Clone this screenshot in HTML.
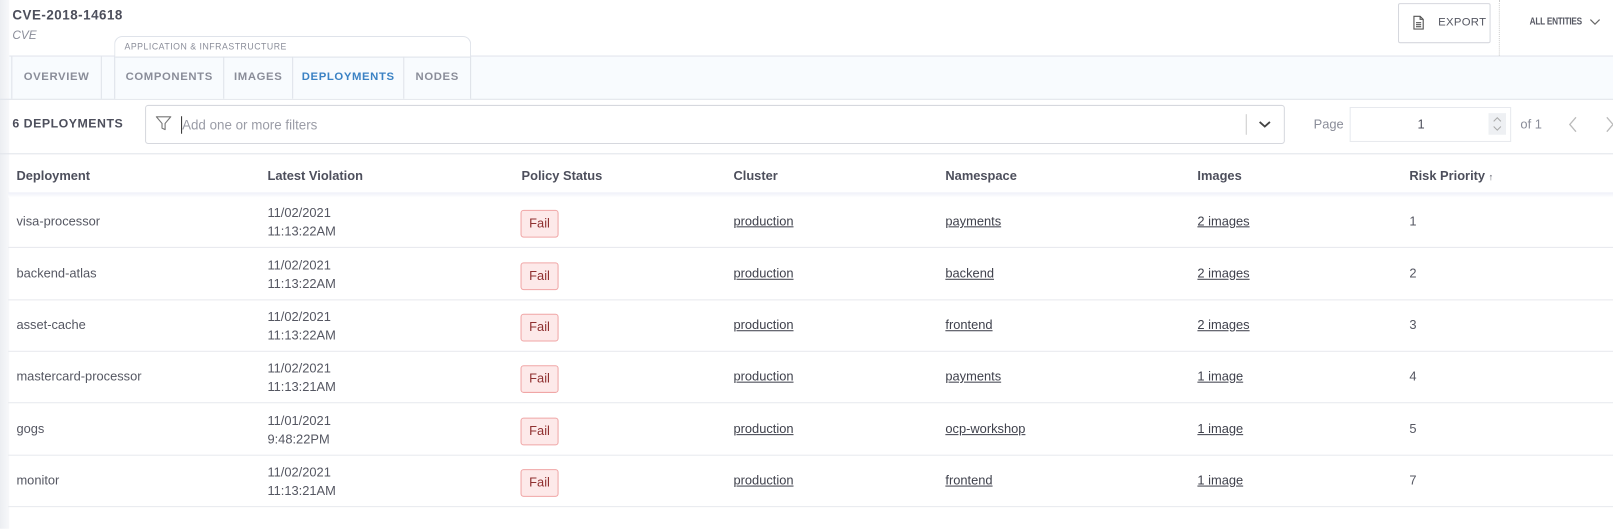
<!DOCTYPE html>
<html><head><meta charset="utf-8"><style>
*{box-sizing:border-box;margin:0;padding:0}
body{width:1613px;height:514px;background:#fff;font-family:"Liberation Sans",sans-serif;color:#4d4f5c;position:relative;overflow:hidden}
#w{position:absolute;left:0;top:0;width:1568px;height:500px;transform:scale(1.0287);transform-origin:0 0}
.a{position:absolute}
.lstrip{left:0;top:0;width:9px;height:514px;background:linear-gradient(90deg,#eceef2,#f7f8fa)}
.t{white-space:nowrap}
.tab{position:absolute;top:55px;height:41px;line-height:41px;font-size:11px;font-weight:bold;letter-spacing:.6px;color:#8a8d99;text-align:center;border-right:1px solid #dfe3ea}
.th{top:164px;font-size:12.5px;font-weight:bold;color:#4d4f5c}
.row{position:absolute;left:8px;width:1560px;height:50px;border-bottom:1px solid #e7e9ee}
.c{position:absolute;font-size:12.5px;color:#555762;white-space:nowrap}
.u{text-decoration:underline;color:#3f414c}
.fail{position:absolute;left:498px;top:13px;width:37px;height:27px;border:1px solid #f0a6a6;background:#fde9e9;border-radius:3px;color:#8f3030;font-size:12.5px;text-align:center;line-height:25px}
</style></head><body><div id="w">
<div class="a lstrip"></div>
<div class="a t" style="left:12px;top:7px;font-size:13px;font-weight:bold;letter-spacing:.5px;color:#4d4f5c">CVE-2018-14618</div>
<div class="a t" style="left:12px;top:29px;font-size:11.5px;font-style:italic;color:#8a8d99">CVE</div>
<div class="a" style="left:9px;top:54px;width:1604px;height:1px;background:#dfe3ea"></div>
<div class="a" style="left:9px;top:55px;width:1604px;height:41px;background:#f8fbfe"></div>
<div class="a" style="left:0;top:96px;width:1613px;height:1px;background:#dfe3ea"></div>
<div class="a" style="left:111px;top:35px;width:347px;height:61px;border:1px solid #dfe3ea;border-bottom:none;border-radius:8px 8px 0 0;background:#fff"></div>
<div class="a" style="left:112px;top:55px;width:345px;height:41px;background:#f8fbfe;border-top:1px solid #dfe3ea"></div>
<div class="a t" style="left:121px;top:40px;font-size:8.5px;letter-spacing:.5px;color:#8a8d99">APPLICATION &amp; INFRASTRUCTURE</div>
<div class="tab" style="left:11px;width:88px;border-left:1px solid #dfe3ea">OVERVIEW</div>
<div class="tab" style="left:111px;width:107px;border-left:1px solid #dfe3ea">COMPONENTS</div>
<div class="tab" style="left:218px;width:67px">IMAGES</div>
<div class="tab" style="left:285px;width:108px;color:#3b82c4">DEPLOYMENTS</div>
<div class="tab" style="left:393px;width:65px">NODES</div>
<div class="a" style="left:1359px;top:3px;width:90px;height:39px;border:1.5px solid #d6d8de;border-radius:2px"></div>
<svg class="a" style="left:1373px;top:15px" width="12" height="14" viewBox="0 0 12 14"><path d="M1.5 .8h6l3 3v9.4h-9z M7.5 .8v3h3 M3.5 7h5 M3.5 9h5 M3.5 11h5" fill="none" stroke="#555" stroke-width="1.1"/></svg>
<div class="a t" style="left:1398px;top:16px;font-size:11px;letter-spacing:.3px;color:#555762">EXPORT</div>
<div class="a" style="left:1457px;top:0;width:0;height:54px;border-left:1px dotted #ccc"></div>
<div class="a t" style="left:1487px;top:16px;font-size:10px;font-weight:bold;color:#555762;letter-spacing:-.3px;transform:scaleX(.8);transform-origin:0 0">ALL ENTITIES</div>
<svg class="a" style="left:1545px;top:18px" width="11" height="7"><path d="M1 1l4.5 4.5L10 1" fill="none" stroke="#666" stroke-width="1.1"/></svg>
<div class="a t" style="left:12px;top:113px;font-size:12px;font-weight:bold;letter-spacing:.5px;color:#4d4f5c">6 DEPLOYMENTS</div>
<div class="a" style="left:141px;top:102px;width:1108px;height:38px;border:1.5px solid #d6d8de;border-radius:3px;background:#fff"></div>
<svg class="a" style="left:151px;top:112px" width="16" height="16" viewBox="0 0 16 16"><path d="M1 1.5h14l-5.5 6.5v6l-3-1.5v-4.5z" fill="none" stroke="#777" stroke-width="1.1" stroke-linejoin="round"/></svg>
<div class="a" style="left:176px;top:113px;width:1px;height:17px;background:#333"></div>
<div class="a t" style="left:177px;top:114px;font-size:13px;color:#9a9ca6">Add one or more filters</div>
<div class="a" style="left:1211px;top:111px;width:1px;height:20px;background:#ccc"></div>
<svg class="a" style="left:1223px;top:117px" width="13" height="8"><path d="M1.5 1.5l5 4.5 5-4.5" fill="none" stroke="#444" stroke-width="1.8"/></svg>
<div class="a t" style="left:1277px;top:114px;font-size:12.5px;color:#8a8d99">Page</div>
<div class="a" style="left:1312px;top:104px;width:157px;height:34px;border:1.5px solid #e7e9ee;background:#fff"></div>
<div class="a t" style="left:1378px;top:114px;font-size:12.5px;color:#4d4f5c">1</div>
<div class="a" style="left:1447px;top:110px;width:17px;height:21px;background:#eef0f3"></div>
<svg class="a" style="left:1450px;top:112px" width="11" height="17"><path d="M2 6l3.5-3.5L9 6 M2 11l3.5 3.5L9 11" fill="none" stroke="#aaa" stroke-width="1"/></svg>
<div class="a t" style="left:1478px;top:114px;font-size:12.5px;color:#8a8d99">of 1</div>
<svg class="a" style="left:1524px;top:113px" width="10" height="16"><path d="M8 1L2 8l6 7" fill="none" stroke="#bbb" stroke-width="1.3"/></svg>
<svg class="a" style="left:1560px;top:113px" width="10" height="16"><path d="M2 1l6 7-6 7" fill="none" stroke="#bbb" stroke-width="1.3"/></svg>
<div class="a" style="left:0;top:149px;width:1613px;height:1px;background:#e1e4ea"></div>
<div class="a" style="left:8px;top:187px;width:1605px;height:5px;background:linear-gradient(#eef0f8,#fff)"></div>
<div class="a t th" style="left:16px">Deployment</div>
<div class="a t th" style="left:260px">Latest Violation</div>
<div class="a t th" style="left:507px">Policy Status</div>
<div class="a t th" style="left:713px">Cluster</div>
<div class="a t th" style="left:919px">Namespace</div>
<div class="a t th" style="left:1164px">Images</div>
<div class="a t th" style="left:1370px">Risk Priority <span style="font-size:9px">↑</span></div>
<div class="row" style="top:191px"><div class="c" style="left:8px;top:17px">visa-processor</div><div class="c" style="left:252px;top:7px;line-height:18px">11/02/2021<br>11:13:22AM</div><div class="fail">Fail</div><div class="c u" style="left:705px;top:17px">production</div><div class="c u" style="left:911px;top:17px">payments</div><div class="c u" style="left:1156px;top:17px">2 images</div><div class="c" style="left:1362px;top:17px">1</div></div>
<div class="row" style="top:242px"><div class="c" style="left:8px;top:17px">backend-atlas</div><div class="c" style="left:252px;top:7px;line-height:18px">11/02/2021<br>11:13:22AM</div><div class="fail">Fail</div><div class="c u" style="left:705px;top:17px">production</div><div class="c u" style="left:911px;top:17px">backend</div><div class="c u" style="left:1156px;top:17px">2 images</div><div class="c" style="left:1362px;top:17px">2</div></div>
<div class="row" style="top:292px"><div class="c" style="left:8px;top:17px">asset-cache</div><div class="c" style="left:252px;top:7px;line-height:18px">11/02/2021<br>11:13:22AM</div><div class="fail">Fail</div><div class="c u" style="left:705px;top:17px">production</div><div class="c u" style="left:911px;top:17px">frontend</div><div class="c u" style="left:1156px;top:17px">2 images</div><div class="c" style="left:1362px;top:17px">3</div></div>
<div class="row" style="top:342px"><div class="c" style="left:8px;top:17px">mastercard-processor</div><div class="c" style="left:252px;top:7px;line-height:18px">11/02/2021<br>11:13:21AM</div><div class="fail">Fail</div><div class="c u" style="left:705px;top:17px">production</div><div class="c u" style="left:911px;top:17px">payments</div><div class="c u" style="left:1156px;top:17px">1 image</div><div class="c" style="left:1362px;top:17px">4</div></div>
<div class="row" style="top:393px"><div class="c" style="left:8px;top:17px">gogs</div><div class="c" style="left:252px;top:7px;line-height:18px">11/01/2021<br>9:48:22PM</div><div class="fail">Fail</div><div class="c u" style="left:705px;top:17px">production</div><div class="c u" style="left:911px;top:17px">ocp-workshop</div><div class="c u" style="left:1156px;top:17px">1 image</div><div class="c" style="left:1362px;top:17px">5</div></div>
<div class="row" style="top:443px"><div class="c" style="left:8px;top:17px">monitor</div><div class="c" style="left:252px;top:7px;line-height:18px">11/02/2021<br>11:13:21AM</div><div class="fail">Fail</div><div class="c u" style="left:705px;top:17px">production</div><div class="c u" style="left:911px;top:17px">frontend</div><div class="c u" style="left:1156px;top:17px">1 image</div><div class="c" style="left:1362px;top:17px">7</div></div>
</div></body></html>
